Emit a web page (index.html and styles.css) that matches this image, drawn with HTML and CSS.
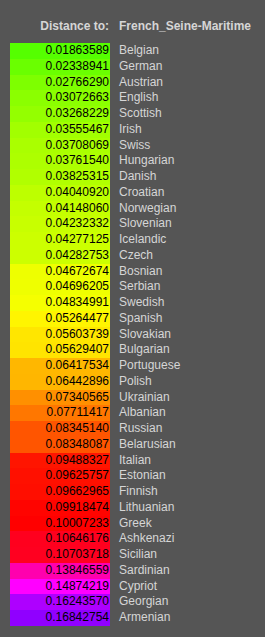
FILE: index.html
```html
<!DOCTYPE html>
<html>
<head>
<meta charset="utf-8">
<link rel="stylesheet" href="styles.css">
</head>
<body>
<div class="panel">
  <div class="head">
    <span class="lbl">Distance to:</span>
    <span class="target">French_Seine-Maritime</span>
  </div>
  <div class="table">
    <div class="row"><span class="val" style="background:hsl(100,100%,50%)">0.01863589</span><span class="name">Belgian</span></div>
    <div class="row"><span class="val" style="background:hsl(95,100%,50%)">0.02338941</span><span class="name">German</span></div>
    <div class="row"><span class="val" style="background:hsl(90.4,100%,50%)">0.02766290</span><span class="name">Austrian</span></div>
    <div class="row"><span class="val" style="background:hsl(87.2,100%,50%)">0.03072663</span><span class="name">English</span></div>
    <div class="row"><span class="val" style="background:hsl(85.1,100%,50%)">0.03268229</span><span class="name">Scottish</span></div>
    <div class="row"><span class="val" style="background:hsl(82,100%,50%)">0.03555467</span><span class="name">Irish</span></div>
    <div class="row"><span class="val" style="background:hsl(79.9,100%,50%)">0.03708069</span><span class="name">Swiss</span></div>
    <div class="row"><span class="val" style="background:hsl(79.2,100%,50%)">0.03761540</span><span class="name">Hungarian</span></div>
    <div class="row"><span class="val" style="background:hsl(78.4,100%,50%)">0.03825315</span><span class="name">Danish</span></div>
    <div class="row"><span class="val" style="background:hsl(75.5,100%,50%)">0.04040920</span><span class="name">Croatian</span></div>
    <div class="row"><span class="val" style="background:hsl(74,100%,50%)">0.04148060</span><span class="name">Norwegian</span></div>
    <div class="row"><span class="val" style="background:hsl(73,100%,50%)">0.04232332</span><span class="name">Slovenian</span></div>
    <div class="row"><span class="val" style="background:hsl(72.1,100%,50%)">0.04277125</span><span class="name">Icelandic</span></div>
    <div class="row"><span class="val" style="background:hsl(72,100%,50%)">0.04282753</span><span class="name">Czech</span></div>
    <div class="row"><span class="val" style="background:hsl(64,100%,50%)">0.04672674</span><span class="name">Bosnian</span></div>
    <div class="row"><span class="val" style="background:hsl(63.7,100%,50%)">0.04696205</span><span class="name">Serbian</span></div>
    <div class="row"><span class="val" style="background:hsl(62.3,100%,50%)">0.04834991</span><span class="name">Swedish</span></div>
    <div class="row"><span class="val" style="background:hsl(57.6,100%,50%)">0.05264477</span><span class="name">Spanish</span></div>
    <div class="row"><span class="val" style="background:hsl(54,100%,50%)">0.05603739</span><span class="name">Slovakian</span></div>
    <div class="row"><span class="val" style="background:hsl(53.7,100%,50%)">0.05629407</span><span class="name">Bulgarian</span></div>
    <div class="row"><span class="val" style="background:hsl(43,100%,50%)">0.06417534</span><span class="name">Portuguese</span></div>
    <div class="row"><span class="val" style="background:hsl(42.8,100%,50%)">0.06442896</span><span class="name">Polish</span></div>
    <div class="row"><span class="val" style="background:hsl(34,100%,50%)">0.07340565</span><span class="name">Ukrainian</span></div>
    <div class="row"><span class="val" style="background:hsl(28,100%,50%)">0.07711417</span><span class="name">Albanian</span></div>
    <div class="row"><span class="val" style="background:hsl(20,100%,50%)">0.08345140</span><span class="name">Russian</span></div>
    <div class="row"><span class="val" style="background:hsl(20,100%,50%)">0.08348087</span><span class="name">Belarusian</span></div>
    <div class="row"><span class="val" style="background:hsl(5,100%,50%)">0.09488327</span><span class="name">Italian</span></div>
    <div class="row"><span class="val" style="background:hsl(3.7,100%,50%)">0.09625757</span><span class="name">Estonian</span></div>
    <div class="row"><span class="val" style="background:hsl(3.3,100%,50%)">0.09662965</span><span class="name">Finnish</span></div>
    <div class="row"><span class="val" style="background:hsl(0.9,100%,50%)">0.09918474</span><span class="name">Lithuanian</span></div>
    <div class="row"><span class="val" style="background:hsl(0,100%,50%)">0.10007233</span><span class="name">Greek</span></div>
    <div class="row"><span class="val" style="background:hsl(353,100%,50%)">0.10646176</span><span class="name">Ashkenazi</span></div>
    <div class="row"><span class="val" style="background:hsl(352.5,100%,50%)">0.10703718</span><span class="name">Sicilian</span></div>
    <div class="row"><span class="val" style="background:hsl(319,100%,50%)">0.13846559</span><span class="name">Sardinian</span></div>
    <div class="row"><span class="val" style="background:hsl(300,100%,50%)">0.14874219</span><span class="name">Cypriot</span></div>
    <div class="row"><span class="val" style="background:hsl(281,100%,50%)">0.16243570</span><span class="name">Georgian</span></div>
    <div class="row"><span class="val" style="background:hsl(274,100%,50%)">0.16842754</span><span class="name">Armenian</span></div>
  </div>
</div>
</body>
</html>
```

FILE: styles.css
```css
html, body {
  margin: 0;
  padding: 0;
  background: #555555;
}

.panel {
  padding: 18px 0 0 10px;
  font-family: "Liberation Sans", Arial, sans-serif;
  font-size: 12px;
  color: #d6d6d6;
}

.head {
  display: grid;
  grid-template-columns: 99px auto;
  column-gap: 10px;
  height: 16px;
  line-height: 16px;
  font-weight: bold;
}

.lbl {
  text-align: right;
}

.table {
  margin-top: 9px;
}

.row {
  display: grid;
  grid-template-columns: 100px auto;
  column-gap: 9px;
  height: 15.76px;
  line-height: 15.76px;
}

.val {
  color: #000000;
  text-align: right;
  padding-right: 1px;
}

.name {
  white-space: nowrap;
}
```
